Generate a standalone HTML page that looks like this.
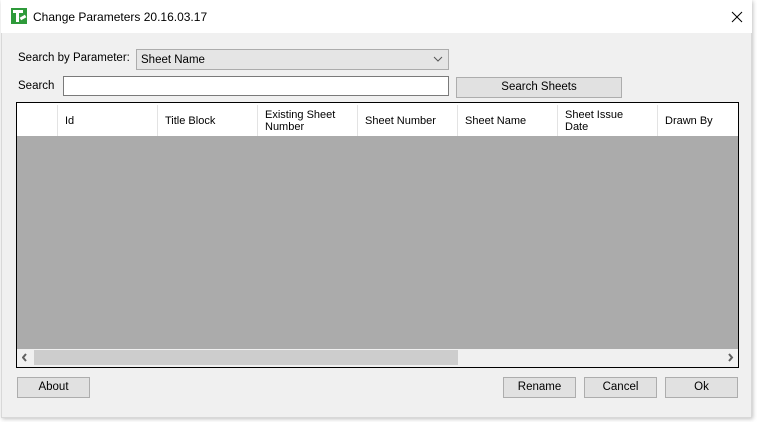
<!DOCTYPE html>
<html><head><style>
body{margin:0;width:757px;height:422px;background:#fff;position:relative;overflow:hidden;font-family:"Liberation Sans",sans-serif;font-size:11.5px;color:#000}
.a{position:absolute}
.win{left:1px;top:0;width:751px;height:418px;background:#f0f0f0;box-shadow:1px 1px 4px rgba(0,0,0,.25);border:1px solid #d8d8d8;box-sizing:border-box}
.title{left:1px;top:0;width:751px;height:33px;background:#fff}
.btn{background:#e1e1e1;border:1px solid #adadad;box-sizing:border-box;text-align:center;line-height:19px;font-size:11.5px}
.hd{top:105px;height:31px;border-right:1px solid #e3e3e3;box-sizing:border-box;background:#fff;padding-left:7px;font-size:11px;display:flex;align-items:center;line-height:12px}
</style></head><body>
<div class="a win"></div>
<div class="a title"></div>
<div class="a" style="left:11px;top:8px;width:16px;height:16px;background:#2e9a3a"></div>
<div class="a" style="left:13px;top:10px;width:10px;height:3px;background:#fff"></div>
<div class="a" style="left:16px;top:10px;width:3px;height:12px;background:#fff"></div>
<div class="a" style="left:20px;top:16px;width:6px;height:3px;background:#fff;transform:rotate(-30deg)"></div>
<div class="a" style="left:33px;top:10px;font-size:12px">Change Parameters 20.16.03.17</div>
<svg class="a" style="left:731px;top:11px" width="12" height="12"><path d="M1 1 L11 11 M11 1 L1 11" stroke="#000" stroke-width="1"/></svg>
<div class="a" style="left:18px;top:52px">Search by Parameter:</div>
<div class="a" style="left:136px;top:49px;width:313px;height:21px;background:#e5e5e5;border:1px solid #acacac;box-sizing:border-box;padding:4px 4px">Sheet Name</div>
<svg class="a" style="left:433px;top:55px" width="10" height="8"><path d="M1 2 L5 6 L9 2" stroke="#555" fill="none"/></svg>
<div class="a" style="left:18px;top:80px">Search</div>
<div class="a" style="left:63px;top:76px;width:386px;height:20px;background:#fff;border:1px solid #7a7a7a;box-sizing:border-box"></div>
<div class="a btn" style="left:456px;top:77px;width:166px;height:21px">Search Sheets</div>
<div class="a" style="left:16px;top:102px;width:723px;height:266px;border:1px solid #000;box-sizing:border-box;background:#ababab"></div>
<div class="a" style="left:17px;top:103px;width:721px;height:2px;background:#fff"></div>
<div class="a hd" style="left:17px;width:41px"></div>
<div class="a hd" style="left:58px;width:100px">Id</div>
<div class="a hd" style="left:158px;width:100px">Title Block</div>
<div class="a hd" style="left:258px;width:100px">Existing Sheet<br>Number</div>
<div class="a hd" style="left:358px;width:100px">Sheet Number</div>
<div class="a hd" style="left:458px;width:100px">Sheet Name</div>
<div class="a hd" style="left:558px;width:100px">Sheet Issue<br>Date</div>
<div class="a hd" style="left:658px;width:80px;border-right:none">Drawn By</div>
<div class="a" style="left:17px;top:349px;width:721px;height:18px;background:#f0f0f0"></div>
<div class="a" style="left:34px;top:350px;width:424px;height:15px;background:#cdcdcd"></div>
<svg class="a" style="left:22px;top:353px" width="6" height="9"><path d="M4 1 L1 4.5 L4 8" stroke="#606060" stroke-width="2" fill="none"/></svg>
<svg class="a" style="left:728px;top:353px" width="6" height="9"><path d="M1 1 L4 4.5 L1 8" stroke="#606060" stroke-width="2" fill="none"/></svg>
<div class="a btn" style="left:17px;top:377px;width:73px;height:21px">About</div>
<div class="a btn" style="left:503px;top:377px;width:73px;height:21px">Rename</div>
<div class="a btn" style="left:584px;top:377px;width:73px;height:21px">Cancel</div>
<div class="a btn" style="left:665px;top:377px;width:73px;height:21px">Ok</div>
</body></html>
